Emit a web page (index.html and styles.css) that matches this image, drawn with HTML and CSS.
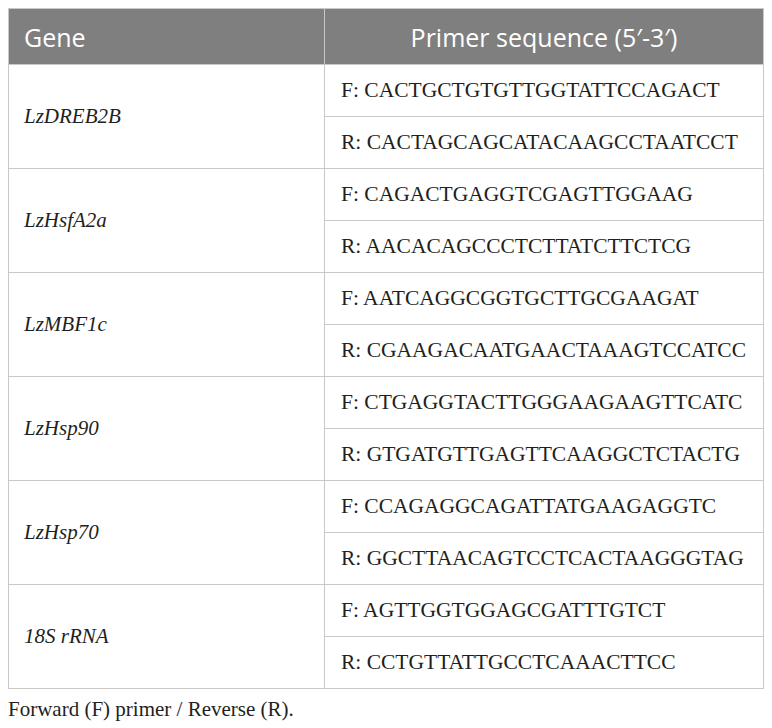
FILE: index.html
```html
<!DOCTYPE html>
<html>
<head>
<meta charset="utf-8">
<link rel="stylesheet" href="styles.css">
</head>
<body>
<table class="primers">
  <thead>
    <tr><th class="gene-h">Gene</th><th class="seq-h">Primer sequence (5′-3′)</th></tr>
  </thead>
  <tbody>
    <tr><td class="gene" rowspan="2">LzDREB2B</td><td class="seq">F: CACTGCTGTGTTGGTATTCCAGACT</td></tr>
    <tr><td class="seq">R: CACTAGCAGCATACAAGCCTAATCCT</td></tr>
    <tr><td class="gene" rowspan="2">LzHsfA2a</td><td class="seq">F: CAGACTGAGGTCGAGTTGGAAG</td></tr>
    <tr><td class="seq">R: AACACAGCCCTCTTATCTTCTCG</td></tr>
    <tr><td class="gene" rowspan="2">LzMBF1c</td><td class="seq">F: AATCAGGCGGTGCTTGCGAAGAT</td></tr>
    <tr><td class="seq">R: CGAAGACAATGAACTAAAGTCCATCC</td></tr>
    <tr><td class="gene" rowspan="2">LzHsp90</td><td class="seq">F: CTGAGGTACTTGGGAAGAAGTTCATC</td></tr>
    <tr><td class="seq">R: GTGATGTTGAGTTCAAGGCTCTACTG</td></tr>
    <tr><td class="gene" rowspan="2">LzHsp70</td><td class="seq">F: CCAGAGGCAGATTATGAAGAGGTC</td></tr>
    <tr><td class="seq">R: GGCTTAACAGTCCTCACTAAGGGTAG</td></tr>
    <tr><td class="gene" rowspan="2">18S rRNA</td><td class="seq">F: AGTTGGTGGAGCGATTTGTCT</td></tr>
    <tr><td class="seq">R: CCTGTTATTGCCTCAAACTTCC</td></tr>
  </tbody>
</table>
<p class="note">Forward (F) primer / Reverse (R).</p>
</body>
</html>
```
FILE: styles.css
```css
html, body {
  margin: 0;
  padding: 0;
  background: #ffffff;
}
body {
  padding: 8px;
  font-family: "Liberation Serif", "Times New Roman", serif;
  color: #231f20;
}
.primers {
  border-collapse: collapse;
  width: 756px;
  table-layout: fixed;
}
.primers th,
.primers td {
  box-sizing: border-box;
  border: 1px solid #c8c8c8;
  vertical-align: middle;
  white-space: nowrap;
}
.primers th {
  background: #7f7f7f;
  color: #ffffff;
  font-family: "Open Sans", "Noto Sans", sans-serif;
  font-weight: normal;
  font-size: 25px;
  height: 56px;
  padding: 0 15px;
}
.gene-h {
  width: 316px;
  text-align: left;
}
.seq-h {
  text-align center;
  text-align: center;
}
.gene {
  font-style: italic;
  font-size: 21px;
  padding: 0 15px;
}
.seq {
  height: 52px;
  font-size: 21.5px;
  padding: 0 16px;
}
.note {
  margin: 8px 0 0 0;
  font-size: 21px;
}
```
